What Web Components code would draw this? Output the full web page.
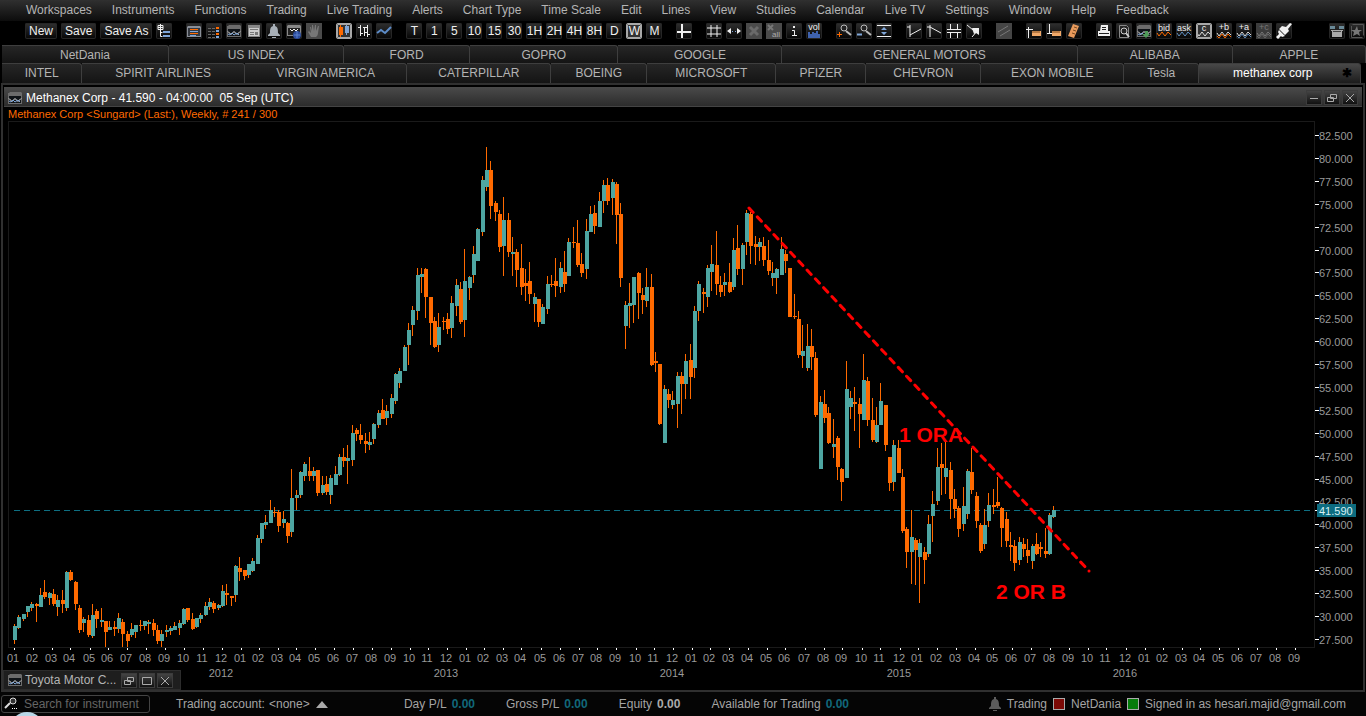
<!DOCTYPE html>
<html lang="en">
<head>
<meta charset="utf-8">
<title>Methanex Corp - Chart Station</title>
<style>
html,body{margin:0;background:#000}
body{font-family:"Liberation Sans",Arial,sans-serif;font-size:12px;line-height:16px;color:#b4b4b4;overflow-x:hidden}
</style>
</head>
<body>
<trade-station></trade-station>
<script>
const define = (name, css, html) => customElements.define(name, class extends HTMLElement {
  connectedCallback() {
    if (this.shadowRoot) return;
    const t = document.createElement('template');
    t.innerHTML = `<style>*{box-sizing:border-box}button,input,select{font:inherit;color:inherit;margin:0;padding:0;border:0;background:none}svg{display:block}${css}</style>` +
      (typeof html === 'function' ? html(this) : html);
    this.attachShadow({mode: 'open'}).append(t.content.cloneNode(true));
  }
});

/* ---------- icons, all on a 16 x 16 grid ---------- */
const O = '#ff6a00', B = '#7fa6d8', W = '#f0f0f0';
const p = (d, c = W, w = 1) => `<path d="${d}" fill="none" stroke="${c}" stroke-width="${w}"/>`;
const f = (d, c = W) => `<path d="${d}" fill="${c}"/>`;
const t = (s, x, y, c = W, z = 9) => `<text x="${x}" y="${y}" fill="${c}" font-size="${z}" text-anchor="middle">${s}</text>`;
const wave = (a, b) => p('M1 10l2 3 3-4 3 4 3-4 3 3', a) + (b ? p('M1 13l2 2 3-4 3 4 3-4 3 3', b) : '');
const pane = f('M1 3h1l1-1h11l1 1v11H1z', '#6c6c6c') + f('M2 6h12v7H2z', '#101418');
const zig = p('M2 8.500l3 3 3-3 3 3 3-3', W) + p('M2 11l2 1 2-2 2 2 3-2 2 2', B);
const ruler = (x, y, w) => f(`M${x} ${y}h${w}v5h-${w}z`, '#f0a868') + p(`M${x + 1} ${y}v2m2-2v2m2-2v2m2-2v2`, '#7a4a20');
const lens = c => p('M10 8l5 4', c, 2) + `<circle cx="8" cy="5" r="3" fill="#222" stroke="${c}"/>`;
const bell = c => f('M7 1h2v2c3 1 3 4 3 7l2 2v1H2v-1l2-2c0-3 0-6 3-7zM6 14h4v1H6z', c);
const off = c => f('M0 0h16v16H0z', c);
const ICON = {
  tree: p('M4.500 1v7M2 4.500h5M2 2.500h5v4h-5zM4.500 8v5.500h2M4.500 9.500h2') + f('M7 8h7v2H7zM7 12h7v2H7z', B),
  list: f('M1 4l1-1h12l1 1v10H1z', '#8a8f98') + f('M2 5h12v8H2z', '#34383f') + p('M4 6.500h8M4 10.500h8', O) + p('M4 8.500h8M4 12.500h6', B),
  columns: p('M2 5.500h3m1 0h3m1 0h3M2 8.500h3m1 0h3m1 0h3M2 11.500h3m1 0h3m1 0h3M2 14.500h3m1 0h3m1 0h3', '#666') + p('M10 5h3M10 11h3', O, 2) + p('M10 8h3M10 14h3', B, 2),
  chart: pane + zig,
  news: f('M2 2h12v12H2z', '#888') + f('M3 5h10v8H3z', '#ccc') + p('M4 6.500h8M4 9.500h4M4 11.500h4', '#777') + f('M9 9h3v3H9z', '#777'),
  bell: bell('#a8b0b8'), alarm: bell('#5c5c5c'),
  globe: f('M1 3l1-1h12l1 1v10H1z', '#888') + f('M2 5h12v7H2z', '#222') + p('M4 6l2 2 2-2 2 2 2-2') + `<circle cx="11" cy="12" r="4" fill="#2c4c9c"/>` + p('M8 12h6M11 8v7', '#5b80cc'),
  hand: off('#4a4a4a') + f('M5 14l-3-5 1-1 2 2-1-6h1l1 4V2h1l1 6 1-6h1v6l2-5h1l-1 7c0 2-1 3-2 4z', '#777'),
  candles: p('M4.500 2v12', O) + f('M3 4h4v8H3z', O) + p('M10.500 2v10', B) + f('M9 3h4v7H9z', B),
  bars: p('M4.500 2v11M2 4.500h3M5 10.500h2M8.500 4v9M7 4.500h4M11.500 2v12M9 9.500h2M12 11.500h2'),
  line: p('M1 10l4-3 4 3 6-6', '#5d8cc8', 2),
  cross: p('M6 1v14M1 9h14', W, 2),
  hash: p('M5 2v12M11 2v12M1 5h14M1 11h14', W, 1),
  spread: f('M1 8l4-3v6zM15 8l-4-3v6z') + p('M6 8.500h1m2 0h1', B),
  del: off('#4a4a4a') + p('M4 4l8 8M12 4l-8 8', '#6a6a6a', 3),
  delall: off('#4a4a4a') + p('M2 2l5 5M7 2L2 7', '#777', 2) + t('all', 10, 14, '#aaa', 8),
  info: p('M6 7.500h2.500V12M6 12.500h5', W) + f('M7 3h2v2H7z'),
  vol: t('vol', 8, 7, W, 9) + f('M2 9h2v2h2V9h2v1h2V8h2v3h2v4H2z', '#3f62ae'),
  zoomin: lens('#bbb') + p('M1 11.500h5M3.500 9v5', O),
  zoomout: lens('#bbb') + p('M1 11.500h5', B, 2),
  fit: p('M1 2.500h14M1 13.500h14') + f('M8 4l3 3H5zM8 12l3-3H5z', B),
  ray: p('M4 2v12M1 4h3M4 12l11-6'), fall: p('M4 2v12M1 4h3l11 6'),
  channel: p('M4.500 1v6M11.500 1v6M1 6.500h14M1 9.500h14M4.500 9v6M11.500 9v6'),
  pointer: p('M1 2l6 5M6 14l6-7') + f('M6 5h7v7l-3-2-2 1z'),
  slant: off('#454545') + p('M2 9l10-6M4 13l10-6', '#777'),
  rulerh: p('M2.500 4v11M0 6.500h7') + ruler(6, 8, 9),
  rulerv: p('M3.500 1v10M1 10.500h5') + ruler(6, 8, 9),
  rulerd: f('M7 1l6 2-5 12-6-2z', '#e89a5c') + p('M8 4l3 1M7 7l3 1M6 10l3 1', '#7a4a20'),
  print: f('M5 2h7v6H4z') + p('M6 4.500h4M6 6.500h4', '#222') + f('M2 8h12v5H2z') + p('M3 10.500h10', '#222'),
  preview: p('M3.500 2.500h7l2 2v10h-9z', '#888') + p('M10 10l3 4', '#ccc', 2) + `<circle cx="8" cy="8" r="3" fill="#222" stroke="#ccc"/>`,
  download: pane + zig + f('M9 8h3v3h2l-4 4-4-4h3z', '#4f9a58'),
  bid: t('bid', 8, 8) + wave(O), ask: t('ask', 8, 8) + wave('#5f8fc0'),
  last: t('c', 8, 8) + wave('#ddd'),
  plusb: t('+b', 8, 7) + wave('#ddd', O), plusa: t('+a', 8, 7) + wave('#ddd', '#5f8fc0'),
  plusc: off('#3c3c3c') + t('+c', 8, 7, '#777') + wave('#777', '#666'),
  plug: f('M10 4l4-4 2 1-4 5 1 2-4 4-6-6 3-3zM3 7l6 6-3 1-1-1-3 3-2-2 3-3-1-2z'),
  tray: f('M1 3h5v3H1zM10 3h5v3h-5z', '#6a8a98') + f('M2 7h12v1h-1v6H3V8H2z', '#aaa') + f('M4 8h8v1H4z', '#444'),
  star: p('M3.500 1.500h11v11', '#555') + p('M2.500 3v11.500h11', '#555') + f('M8 3l1 4h4l-3 2 1 4-3-2-4 2 1-4-3-2h4z', '#777'),
  search: `<circle cx="9" cy="5" r="3" fill="#333" stroke="#ddd"/>` + p('M6 7l-5 5', '#ddd', 2) + p('M8 12.500h1m1 0h1m1 0h1', '#fff'),
  min: p('M4 8.500h8', '#aaa'), restore: p('M6.500 4.500h6v4h-6zM3.500 7.500h6v4h-6z', '#aaa'),
  max: p('M3.500 4.500h9v7h-9z', '#aaa'), close: p('M4 4l8 8M12 4l-8 8', '#aaa')
};
define('ui-icon', ':host{display:block;flex:none;width:16px;height:16px}', el =>
  `<svg viewBox="0 0 16 16" width="16" height="16" font-family="Liberation Sans" aria-hidden="true">${ICON[el.getAttribute('name')]}</svg>`);

/* ---------- toolbar ---------- */
define('tool-button', `
:host{display:block;position:relative;height:16px}
button{display:flex;align-items:center;justify-content:center;width:16px;height:16px;border-radius:2px;color:#f0f0f0;background:linear-gradient(#303030,#050505);box-shadow:inset 0 0 0 1px #262626;line-height:16px;white-space:nowrap}
:host([wide]) button{width:auto;padding:0 4px}
:host([on]) button{background:#333}
:host([on]) button::after{content:"";position:absolute;inset:0;border:1px solid #a8a8a8;outline:1px solid #a8a8a8;outline-offset:-2px;border-radius:2px}`,
  el => `<button type="button" aria-label="${el.getAttribute('label') || el.textContent}"><slot></slot></button>`);
const iconBtn = s => { const [n, on] = s.split('!'); return `<tool-button label="${n}"${on === undefined ? '' : ' on'}><ui-icon name="${n}"></ui-icon></tool-button>`; };
const textBtn = s => { const [n, on] = s.split('!'); return `<tool-button${on === undefined ? '' : ' on'}>${n}</tool-button>`; };
const grp = s => `<div>${s}</div>`;
const icons = s => grp(s.split(' ').map(iconBtn).join(''));
define('tool-bar', `
:host{display:flex;align-items:flex-start;gap:14px;height:24px;padding:2px 1px 0 25px;background:#000}
div{display:flex;gap:4px}div:last-child{margin-left:auto}`,
  grp('<tool-button wide>New</tool-button><tool-button wide>Save</tool-button><tool-button wide>Save As</tool-button>' + iconBtn('tree')) +
  icons('list columns chart news bell globe hand') + icons('candles! bars line') +
  grp('T 1 5 10 15 30 1H 2H 4H 8H D W! M'.split(' ').map(textBtn).join('')) +
  icons('cross') + icons('hash spread del delall info vol') + icons('zoomin zoomout fit') +
  icons('ray fall channel pointer') + icons('slant') + icons('rulerh rulerv rulerd') +
  icons('print preview download bid ask last! plusb plusa plusc plug') + icons('tray star'));

/* ---------- menu ---------- */
define('menu-bar', `
:host{display:block;background:linear-gradient(#303030,#0c0c0c)}
nav{display:flex;gap:20px;height:21px;padding:0 26px}
button{line-height:21px;white-space:nowrap}`,
  '<nav>' + ['Workspaces','Instruments','Functions','Trading','Live Trading','Alerts','Chart Type','Time Scale','Edit','Lines','View','Studies','Calendar','Live TV','Settings','Window','Help','Feedback'].map(m => `<button type="button">${m}</button>`).join('') + '</nav>');

/* ---------- workspace tabs, widths as shares of the row ---------- */
define('tab-strip', `
:host{display:block;padding:0 2px}
div{display:flex}.a{margin-right:-2px;height:18px}.b{height:20px;padding-right:3px}
button{flex:1 1 0;min-width:0;height:100%;border:solid #3e3e3e;border-width:1px 1px 0 0;border-radius:0 3px 0 0;background:linear-gradient(#262626,#141414);overflow:hidden;white-space:nowrap;line-height:19px}
.on{position:relative;color:#fff;background:linear-gradient(#484848,#1c1c1c)}
.on span{margin-right:14px}
.on b{position:absolute;right:8px;color:#000}`, () => {
  const row = (c, list) => `<div class="${c}" role="tablist">` + list.map(([n, w, on]) =>
    `<button type="button" role="tab" style="flex-grow:${w}"${on ? ' class="on" aria-selected="true"' : ''}>${on ? `<span>${n}</span><b>✱</b>` : n}</button>`).join('') + '</div>';
  return row('a', [['NetDania',167],['US INDEX',175],['FORD',126],['GOPRO',148],['GOOGLE',164],['GENERAL MOTORS',296],['ALIBABA',155],['APPLE',133]]) +
    row('b', [['INTEL',80],['SPIRIT AIRLINES',163],['VIRGIN AMERICA',163],['CATERPILLAR',144],['BOEING',96],['MICROSOFT',129],['PFIZER',90],['CHEVRON',115],['EXON MOBILE',143],['Tesla',75],['methanex corp',162,1]]);
});

/* ---------- window chrome ---------- */
define('window-button', `:host{display:block}button{display:block;width:14px;height:13px;overflow:hidden;background:linear-gradient(#444,#111);box-shadow:0 0 0 1px #3c3c3c}ui-icon{margin:-1px}`,
  el => `<button type="button" aria-label="${el.getAttribute('icon')}"><ui-icon name="${el.getAttribute('icon')}"></ui-icon></button>`);
define('chart-window', `
:host{display:block;position:relative;margin:0 1px;padding:2px 1px 0;border:2px solid #303030;background:#000}
header{display:flex;align-items:center;gap:4px;height:20px;padding:2px 5px 0 3px;background:linear-gradient(#4a4a4a,#2c2c2c);border-bottom:1px solid #444;color:#fff;white-space:pre}
header div{display:flex;gap:4px;margin-left:auto}
header ui-icon{margin-right:-1px}`, `
<header><ui-icon name="chart"></ui-icon><slot name="title"></slot><div><window-button icon="min"></window-button><window-button icon="restore"></window-button><window-button icon="close"></window-button></div></header>
<slot></slot>`);
define('docked-window', `
:host{position:absolute;left:0;bottom:0;display:flex;align-items:center;gap:4px;width:178px;height:20px;padding:0 8px 0 3px;background:#1e1e1e;border:1px solid #2c2c2c;white-space:nowrap}
ui-icon{margin-right:-2px}
window-button:nth-of-type(1){margin-left:auto}`,
  `<ui-icon name="chart"></ui-icon><slot></slot><window-button icon="restore"></window-button><window-button icon="max"></window-button><window-button icon="close"></window-button>`);

/* ---------- price chart ----------
   one candle per entry: x, high, body top, body bottom, low; U closes up, D closes down */
const CANDLES = `14,624,626,640,644U 18,615,617,628,629U 23,614,614,619,621U 27,606,606,612,617U 31,602,604,608,611U 36,603,604,606,622D 40,588,595,607,607U 44,580,592,597,599D 49,592,593,598,605U 53,589,594,604,606D 57,595,600,607,616U 62,590,600,604,613D 66,571,572,608,611U 70,570,572,580,581D 75,581,582,604,610D 79,605,608,630,633D 83,617,619,623,632U 88,615,620,635,637D 92,604,615,636,638U 96,609,611,619,628D 101,608,620,622,627U 105,621,621,632,647D 109,621,627,630,630U 114,621,627,629,636D 118,613,618,629,633U 122,619,622,634,647D 127,631,634,641,647D 131,623,629,635,637U 135,625,625,632,638U 140,620,625,626,631D 144,621,621,626,630U 148,620,622,624,634U 153,619,623,630,636D 157,625,630,641,644D 161,630,634,641,647U 166,625,630,632,637U 170,626,628,631,635U 174,622,626,630,630U 179,620,623,628,635U 183,608,609,624,625U 187,608,608,620,622D 192,613,619,629,630D 196,618,618,627,628U 200,613,615,619,623U 205,602,606,615,616U 209,598,602,607,610U 213,601,603,609,613D 218,604,605,608,610U 222,585,591,606,607U 226,584,593,595,605D 231,596,596,598,606D 235,565,566,595,602U 239,557,568,572,581D 244,570,570,576,580D 248,564,564,575,578U 252,558,561,571,572U 257,535,538,564,564U 261,523,523,539,543U 265,515,522,525,529U 270,500,510,523,523U 274,507,512,513,517D 278,510,512,526,532D 283,511,519,523,528U 287,522,523,536,543D 291,469,498,532,537U 296,490,495,498,510U 300,471,472,495,498U 304,462,464,476,481U 309,457,471,476,481D 313,467,471,476,481U 317,470,470,493,496D 322,476,485,493,495U 326,476,484,492,495D 330,475,478,495,504U
335,466,474,485,485U 339,454,457,475,476U 343,448,457,461,467D 347,445,458,461,484U 352,425,433,460,466U 356,428,430,434,441D 360,424,435,440,444D 365,433,441,444,453D 369,432,442,445,450U 373,423,424,439,444U 378,410,413,425,428U 382,399,410,419,419D 386,405,411,418,425U 391,394,398,414,418U 395,373,374,401,404U 399,368,371,383,388U 404,345,347,371,371U 408,323,330,345,365U 412,306,310,325,336U 417,268,275,311,320U 421,268,274,277,293U 425,268,269,297,318D 430,297,297,323,345D 434,317,321,347,348D 438,313,327,345,352U 443,317,321,322,330D 447,313,319,329,334D 451,296,303,328,338U 456,279,285,306,316U 460,282,289,322,324D 464,249,281,320,337U 469,276,277,288,300U 473,246,254,275,283U 477,228,229,261,261U 482,176,180,232,236U 486,147,170,187,191U 490,161,170,206,219D 495,201,203,212,221D 499,210,214,247,252D 503,197,220,246,276U 508,213,220,252,257D 512,237,252,254,276U 516,249,252,270,287D 521,244,268,287,295D 525,269,283,286,301D 529,262,281,294,304D 534,293,297,304,322U 538,299,299,322,327D 542,304,307,324,324U 547,276,284,309,314U 551,275,284,285,287D 555,258,281,286,297D 560,262,268,287,293U 564,251,272,284,292D 568,238,242,276,276U 573,227,242,243,248D 577,220,243,265,267D 581,253,264,273,277D 586,219,231,269,279U 590,206,214,232,232U 594,205,213,226,234D 599,192,201,227,227U 603,180,185,201,213U 607,178,185,201,205D 612,179,182,198,215U 616,182,184,215,244D 620,203,214,278,287D 625,301,305,326,349U
629,283,303,306,328U 633,277,277,305,323U 638,272,273,293,319D 642,288,295,300,314D 646,268,287,301,307U 651,274,287,365,366D 655,352,361,363,372D 659,364,364,424,425D 664,385,389,443,443U 668,389,394,400,408D 672,391,400,405,409U 677,372,376,404,428U 681,372,376,384,414D 685,354,361,384,399U 690,344,360,377,399D 694,306,311,368,378U 698,281,284,311,321U 703,288,292,294,313D 707,265,268,297,307U 711,245,264,272,291U 716,231,265,284,295D 720,276,285,292,297D 724,273,282,285,296U 729,263,282,292,293D 733,238,250,287,290U 737,225,248,269,275D 742,243,245,269,285U 746,210,213,242,255U 750,212,214,246,264D 755,236,244,247,265D 759,238,242,247,261U 763,237,246,260,266D 768,240,260,271,275D 772,262,273,278,286U 776,268,269,278,294U 781,237,249,275,275U 785,250,254,261,273D 789,268,268,317,317D 794,294,316,317,319D 798,311,319,355,358D 802,325,351,356,368U 807,324,346,368,371U 811,329,346,357,370D 815,352,358,415,417D 820,396,402,469,469U 824,390,404,418,423D 828,407,413,443,444D 833,419,444,447,458U
837,436,438,467,480D 841,468,469,482,501D 846,361,389,478,478U 850,391,398,407,419U 854,387,402,404,431D 859,398,404,414,448D 863,354,380,420,420U 867,377,381,420,426D 872,398,420,440,442D 876,407,425,442,443U 880,383,401,425,425U 885,405,405,445,451D 889,457,457,483,491D 893,440,445,482,491U 898,440,448,473,473D 902,469,477,531,533D 906,527,529,552,568D 911,510,537,552,584U 915,538,540,550,585D 919,539,543,557,603U 924,547,552,560,584D 928,515,524,554,557U 932,491,504,516,542U 937,448,467,501,505U 941,443,464,468,495D 945,442,468,477,494U 950,462,470,499,519D 954,489,499,509,518D 958,506,508,529,537D 963,487,506,524,531U 967,469,471,514,519U 971,448,472,490,494D 976,492,496,521,528D 980,523,525,551,553D 984,509,525,544,549U 988,493,505,521,527U 993,489,505,507,514D 997,477,502,506,508D 1001,507,508,528,547D 1006,512,519,541,547D 1010,532,545,547,561D 1014,540,546,563,571D 1019,537,542,560,565U 1023,538,544,549,557D 1027,539,550,556,563D 1032,544,546,561,569U 1036,533,544,554,555D 1040,542,547,549,557D 1045,528,551,554,558D 1049,513,515,554,555U 1053,506,510,517,518U`;
const MONTHS = [13,32,51,69,89,107,126,145,164,183,202,221,240,258,277,295,314,333,352,371,390,409,427,446,465,483,502,520,540,559,578,596,615,635,653,672,691,709,728,747,766,784,804,823,841,861,879,899,917,936,955,974,992,1011,1030,1049,1068,1087,1105,1125,1144,1162,1181,1199,1218,1237,1256,1275,1294];
define('candle-chart', `
:host{display:block}
p{margin:0;padding-left:4px;height:13px;line-height:14px;font-size:11px;color:#ff6a00;white-space:nowrap}
svg{width:100%;height:auto;font-size:11px}
.ax{fill:#999}.mark{fill:#f00;font-weight:bold;font-size:21px}`, () => {
  let s = '';
  for (const c of CANDLES.split(/\s+/)) {
    const [x, hi, top, bot, lo] = c.slice(0, -1).split(',').map(Number);
    s += `<path fill="#ff6a00" d="M${x} ${hi}h1V${lo}h-1z"/><path fill="${c.endsWith('U') ? '#4ea6a2' : '#ff6a00'}" d="M${x - 1} ${top}h4V${bot}h-4z"/>`;
  }
  let ax = '';
  for (let i = 0; i < 23; i++) {
    const y = Math.round(135 + i * 22.9);
    ax += `<path fill="#fff" d="M1315 ${y}h4v1h-4z"/><text x="1319" y="${y + 5}">${(82.5 - i * 2.5).toFixed(3)}</text>`;
  }
  MONTHS.forEach((x, i) => ax += `<path fill="#fff" d="M${x + 1} 648h1v2h-1z"/><text x="${x}" y="662" text-anchor="middle">${String(i % 12 + 1).padStart(2, '0')}</text>`);
  [221, 446, 672, 899, 1125].forEach((x, i) => ax += `<text x="${x}" y="677" text-anchor="middle">${2012 + i}</text>`);
  return `<p><slot></slot></p>
<svg viewBox="4 120 1358 570" role="img" aria-label="Weekly candlestick chart">
<path d="M8 121h1307v527H8zM9 122v525h1305V122z" fill="#1a1a1a" fill-rule="evenodd"/>
<g shape-rendering="crispEdges"><path d="M14 510.500H1310" stroke="#0d6f82" stroke-dasharray="6 4"/>${s}</g>
<g class="ax">${ax}</g>
<path fill="#fff" d="M1315 510h2v1h-2z"/><path fill="#0d6c80" d="M1317 504h39v13h-39z"/><text x="1319" y="515" fill="#d8f0f4">41.590</text>
<path d="M749 208L1089 571" stroke="#f00" stroke-width="3" pathLength="492" stroke-dasharray="6 6" stroke-linecap="round"/>
<text class="mark" x="899" y="442">1 ORA</text><text class="mark" x="996" y="599">2 OR B</text>
</svg>`;
});

/* ---------- status bar ---------- */
define('money-field', `:host{display:flex;gap:5px;white-space:nowrap}b{color:#11687a}:host([plain]) b{color:#aaa}`,
  `<span><slot></slot></span><b>0.00</b>`);
define('status-bar', `
:host{display:flex;align-items:center;position:relative;height:24px;overflow:hidden;background:#050505;color:#a4a4a4;white-space:nowrap}
.find{display:flex;align-items:center;gap:4px;width:149px;height:18px;margin-left:1px;padding-left:2px;border:1px solid #444;border-radius:3px}
input{width:122px;outline:0}input::placeholder{color:#666;opacity:1}
.acct{display:flex;align-items:center;gap:4px;margin:0 76px 0 26px}
select{appearance:none;width:43px;height:16px;background:#050505;outline:0}
.sums{display:flex;gap:31px}
.who{display:flex;align-items:center;gap:6px;margin-left:auto;padding-right:20px}
i{width:12px;height:12px;border:1px solid #aaa;background:#7c0a06}.ok{background:#067c0a}
.who ui-icon{margin-right:-2px}
.orb{position:absolute;left:10px;top:20px;width:34px;height:34px;border-radius:50%;background:#b8d8e8}`, `
<div class="find"><ui-icon name="search"></ui-icon><input type="text" aria-label="Search for instrument" placeholder="Search for instrument"></div>
<div class="acct"><label for="acct">Trading account:</label><select id="acct"><option>&lt;none&gt;</option></select><svg width="12" height="7" viewBox="0 0 12 7"><path d="M0 7l6-7 6 7z" fill="#aaa"/></svg></div>
<div class="sums"><money-field>Day P/L</money-field><money-field>Gross P/L</money-field><money-field plain>Equity</money-field><money-field>Available for Trading</money-field></div>
<div class="who"><ui-icon name="alarm"></ui-icon><span>Trading</span><i></i><span>NetDania</span><i class="ok"></i><span>Signed in as hesari.majid@gmail.com</span></div>
<span class="orb"></span>`);

define('trade-station', ':host{display:block}', `
<menu-bar></menu-bar><tool-bar></tool-bar><tab-strip></tab-strip>
<main><chart-window><span slot="title">Methanex Corp - 41.590 - 04:00:00  05 Sep (UTC)</span>
<candle-chart>Methanex Corp &lt;Sungard&gt; (Last:), Weekly, # 241 / 300</candle-chart>
<docked-window>Toyota Motor C...</docked-window></chart-window></main>
<status-bar></status-bar>`);
</script>
</body>
</html>
